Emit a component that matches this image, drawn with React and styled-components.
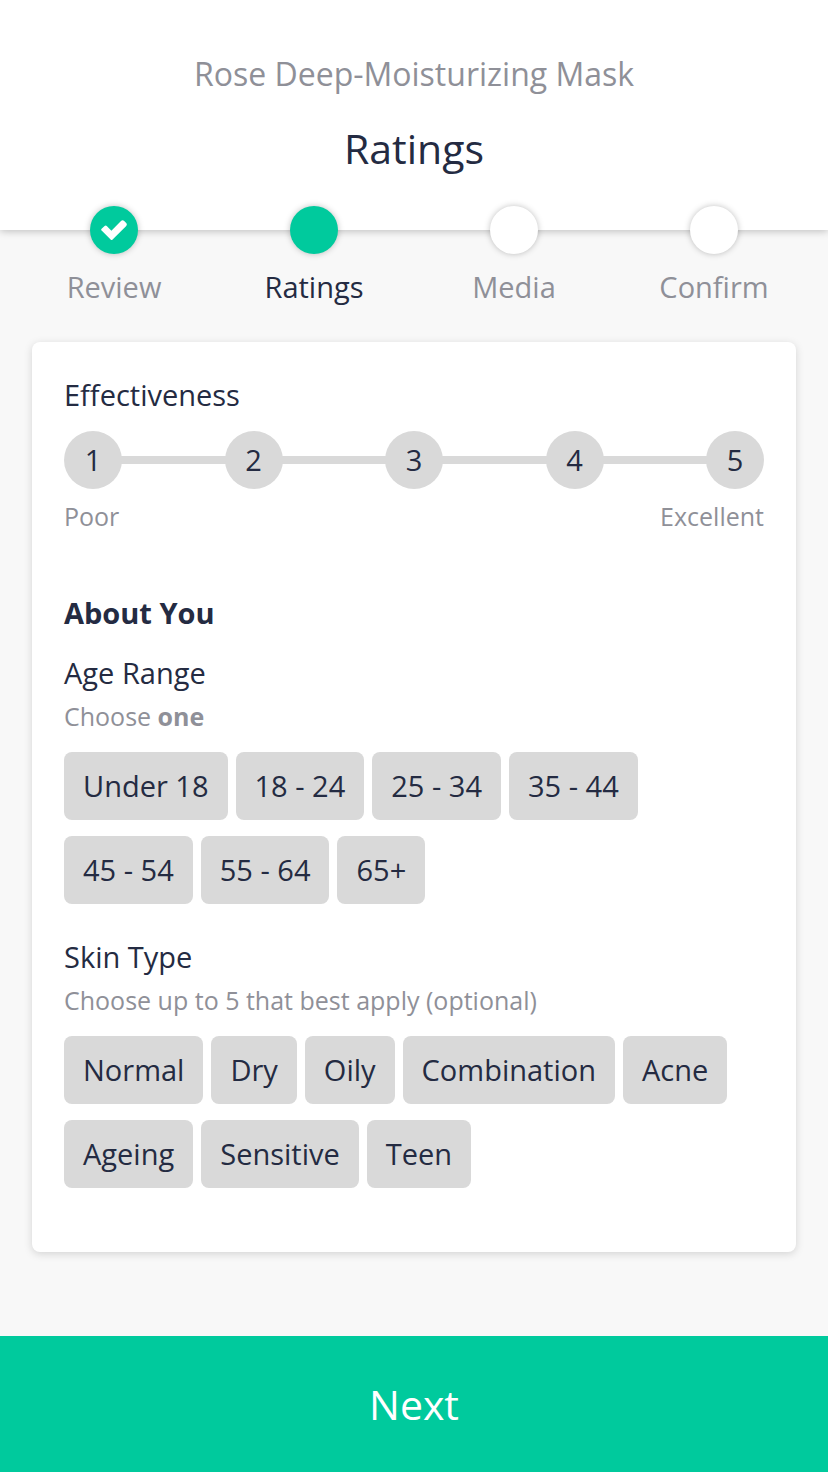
import React, { useState } from "react";
import styled, { createGlobalStyle } from "styled-components";

const steps = ["Review", "Ratings", "Media", "Confirm"];
const scores = ["1", "2", "3", "4", "5"];
const ages = ["Under 18", "18 - 24", "25 - 34", "35 - 44", "45 - 54", "55 - 64", "65+"];
const skinTypes = ["Normal", "Dry", "Oily", "Combination", "Acne", "Ageing", "Sensitive", "Teen"];

const App = () => {
  const [score, setScore] = useState("");
  const [age, setAge] = useState("");
  const [skin, setSkin] = useState([]);

  const toggleSkin = (type) => {
    if (skin.includes(type)) {
      setSkin(skin.filter((item) => item !== type));
    } else if (skin.length < 5) {
      setSkin([...skin, type]);
    }
  };

  const current = 1;

  return (
    <Page>
      <GlobalStyle />
      <Header>
        <Product>Rose Deep-Moisturizing Mask</Product>
        <Title>Ratings</Title>
      </Header>
      <Steps>
        {steps.map((step, i) => (
          <Step key={step} $active={i === current}>
            <Dot $filled={i <= current}>
              {i < current && (
                <svg width="26" height="20" viewBox="0 0 26 20" aria-hidden="true">
                  <path d="M0.6 8.8 L3.6 6 Q4.8 5 6 6.2 L10.4 10.8 L20 1 Q21.6 -0.5 23.2 1 L25.2 3 Q26.6 4.6 25 6.2 L11.6 19.4 Q10.6 20.4 9.6 19.4 L0.6 10.6 Q-0.3 9.7 0.6 8.8 Z" />
                </svg>
              )}
            </Dot>
            {step}
          </Step>
        ))}
      </Steps>
      <Form id="ratings" onSubmit={(e) => e.preventDefault()}>
        <Group>
          <Legend>Effectiveness</Legend>
          <Scale>
            {scores.map((n) => (
              <Score key={n} $checked={score === n}>
                <Choice type="radio" name="score" value={n} checked={score === n} onChange={() => setScore(n)} />
                {n}
              </Score>
            ))}
          </Scale>
          <ScaleEnds>
            <Hint>Poor</Hint>
            <Hint>Excellent</Hint>
          </ScaleEnds>
        </Group>

        <Heading>About You</Heading>
        <Group>
          <Legend>Age Range</Legend>
          <Hint>
            Choose <b>one</b>
          </Hint>
          <Chips>
            {ages.map((range) => (
              <Chip key={range} $checked={age === range}>
                <Choice type="radio" name="age" value={range} checked={age === range} onChange={() => setAge(range)} />
                {range}
              </Chip>
            ))}
          </Chips>
        </Group>
        <Group>
          <Legend>Skin Type</Legend>
          <Hint>Choose up to 5 that best apply (optional)</Hint>
          <Chips>
            {skinTypes.map((type) => (
              <Chip key={type} $checked={skin.includes(type)}>
                <Choice type="checkbox" name="skin" value={type} checked={skin.includes(type)} onChange={() => toggleSkin(type)} />
                {type}
              </Chip>
            ))}
          </Chips>
        </Group>
      </Form>
      <Next type="submit" form="ratings">Next</Next>
    </Page>
  );
};

const GlobalStyle = createGlobalStyle`
  * {
    box-sizing: border-box;
  }

  body {
    margin: 0;
    background: #f8f8f8;
    color: #242b42;
    font-family: "Open Sans", sans-serif;
    font-size: 29px;
    line-height: 40px;
  }
`;

const Page = styled.div`
  min-height: 100vh;
  display: flex;
  flex-direction: column;
`;

const Header = styled.header`
  padding: 50px 32px 54px;
  background: #fff;
  box-shadow: 0 1px 8px rgba(0, 0, 0, 0.25);
  text-align: center;
`;

const Product = styled.p`
  margin: 0;
  color: #8f9098;
  font-size: 32px;
  line-height: 48px;
`;

const Title = styled.h1`
  margin: 22px 0 0;
  font-size: 41px;
  font-weight: 400;
  line-height: 56px;
`;

const Steps = styled.ol`
  display: grid;
  grid-template-columns: repeat(4, 1fr);
  list-style: none;
  margin: -24px 0 0;
  padding: 0 14px;
`;

const Step = styled.li`
  display: flex;
  flex-direction: column;
  align-items: center;
  gap: 13px;
  color: ${(props) => (props.$active ? "#242b42" : "#8f9098")};
`;

const Dot = styled.span`
  display: flex;
  align-items: center;
  justify-content: center;
  width: 48px;
  height: 48px;
  border-radius: 50%;
  background: ${(props) => (props.$filled ? "#00ca9d" : "#fff")};
  box-shadow: 0 0 6px rgba(0, 0, 0, 0.25);

  path {
    fill: #fff;
  }
`;

const Form = styled.form`
  flex: 1;
  margin: 35px 32px 84px;
  padding: 33px 32px 28px;
  border-radius: 8px;
  background: #fff;
  box-shadow: 0 2px 8px rgba(0, 0, 0, 0.15);
`;

const Group = styled.fieldset`
  min-width: 0;
  margin: 0 0 33px;
  padding: 0;
  border: 0;
`;

const Legend = styled.legend`
  padding: 0;
`;

const Hint = styled.p`
  margin: 0;
  color: #8f9098;
  font-size: 25px;
  line-height: 46px;
`;

const Heading = styled.h2`
  margin: 54px 0 20px;
  font-size: 29px;
  font-weight: 700;
  line-height: 40px;
`;

const Scale = styled.div`
  display: flex;
  justify-content: space-between;
  margin-top: 16px;
  background: linear-gradient(#d9d9d9, #d9d9d9) center / 90% 8px no-repeat;
`;

const Score = styled.label`
  position: relative;
  width: 58px;
  border-radius: 50%;
  background: ${(props) => (props.$checked ? "#00ca9d" : "#d9d9d9")};
  line-height: 58px;
  text-align: center;
  cursor: pointer;
`;

const Choice = styled.input`
  appearance: none;
  position: absolute;
  inset: 0;
  margin: 0;
  border-radius: inherit;
  cursor: pointer;
`;

const ScaleEnds = styled.div`
  display: flex;
  justify-content: space-between;
  margin-top: 4px;
`;

const Chips = styled.div`
  display: flex;
  flex-wrap: wrap;
  gap: 16px 8px;
  margin-top: 13px;
`;

const Chip = styled.label`
  position: relative;
  padding: 14px 19px;
  border-radius: 8px;
  background: ${(props) => (props.$checked ? "#00ca9d" : "#d9d9d9")};
  cursor: pointer;
`;

const Next = styled.button`
  padding: 40px;
  border: 0;
  background: #00ca9d;
  color: #fff;
  font-family: inherit;
  font-size: 41px;
  font-weight: 500;
  line-height: 56px;
  cursor: pointer;
`;

export default App;
